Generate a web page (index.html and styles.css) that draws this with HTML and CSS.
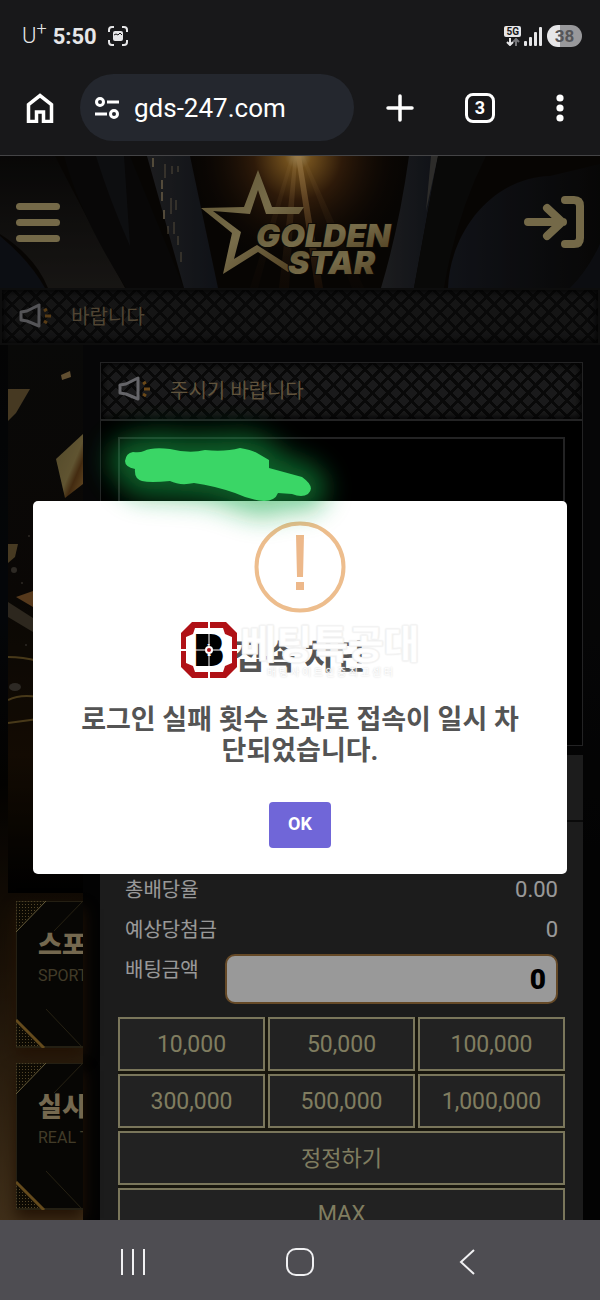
FILE: index.html
```html
<!DOCTYPE html>
<html lang="ko">
<head>
  <meta charset="UTF-8" />
  <meta name="viewport" content="width=device-width, initial-scale=1.0"/>
  <title>Golden Star</title>
  <link rel="stylesheet" href="styles.css">
</head>
<body>
  <div class="status-bar">
    <span class="carrier">U<sup>+</sup></span>
    <span class="clock">5:50</span>
    <svg class="capture" width="20" height="20" viewBox="0 0 20 20">
      <path d="M1 6V4q0-3 3-3h2M14 1h2q3 0 3 3v2M19 14v2q0 3-3 3h-2M6 19H4q-3 0-3-3v-2" fill="none" stroke="#e6e6e8" stroke-width="2"/>
      <rect x="5" y="5" width="10" height="10" rx="2" fill="#e6e6e8"/>
      <path d="M6 9l2-1 2 1 2-2 2 2" fill="none" stroke="#18181a" stroke-width="1"/>
    </svg>
    <span class="network"><b>5G</b>
      <svg width="14" height="8" viewBox="0 0 14 8" fill="none" stroke-width="2">
        <path d="M4 0v6M1 4l3 3 3-3" stroke="#e6e6e8"/>
        <path d="M10 8V2M7 4l3-3 3 3" stroke="#77777b"/>
      </svg>
    </span>
    <svg width="18" height="19" viewBox="0 0 18 19" fill="#e6e6e8">
      <rect x="0" y="14" width="3" height="5" rx="1"/><rect x="5" y="10" width="3" height="9" rx="1"/>
      <rect x="10" y="5" width="3" height="14" rx="1"/><rect x="15" y="0" width="3" height="19" rx="1"/>
    </svg>
    <span class="battery">38</span>
  </div>

  <div class="toolbar">
    <button class="tool" aria-label="Home">
      <svg width="28" height="30" viewBox="0 0 28 30"><path d="M2.500 28.500V11.500L14 2.500l11.500 9v17h-8v-9.500h-7v9.500z" fill="none" stroke="#fff" stroke-width="3.500"/></svg>
    </button>
    <label class="address">
      <svg width="26" height="24" viewBox="0 0 26 24" fill="none" stroke="#fff" stroke-width="3">
        <circle cx="6" cy="6" r="3.500"/><path d="M13 6h12M1 18h12"/><circle cx="20" cy="18" r="3.500"/>
      </svg>
      <input type="text" value="gds-247.com" aria-label="Address">
    </label>
    <button class="tool" aria-label="New tab">
      <svg width="28" height="28" viewBox="0 0 28 28"><path d="M14 2v24M2 14h24" stroke="#fff" stroke-width="3.500" stroke-linecap="round"/></svg>
    </button>
    <button class="tool" aria-label="Tabs"><span class="tab-count">3</span></button>
    <button class="tool" aria-label="More">
      <svg width="8" height="28" viewBox="0 0 8 28" fill="#fff"><circle cx="4" cy="4" r="3.600"/><circle cx="4" cy="14" r="3.600"/><circle cx="4" cy="24" r="3.600"/></svg>
    </button>
  </div>

  <div class="site">
    <header class="site-header">
      <svg class="curtain" viewBox="0 0 600 132" preserveAspectRatio="xMidYMid slice">
        <defs>
          <radialGradient id="glow" cx="298" cy="0" r="110" gradientUnits="userSpaceOnUse">
            <stop offset="0" stop-color="#ffd98c"/><stop offset=".12" stop-color="#b8812f"/>
            <stop offset=".4" stop-color="#4d2c10"/><stop offset="1" stop-color="#120a05" stop-opacity="0"/>
          </radialGradient>
          <linearGradient id="fold" x1="0" x2="1"><stop offset="0" stop-color="#2f3033"/><stop offset="1" stop-color="#1a1e27"/></linearGradient>
          <linearGradient id="round" x1="0" x2="1"><stop offset="0" stop-color="#1c1f28"/><stop offset="1" stop-color="#0d0c0b"/></linearGradient>
          <linearGradient id="ray" x1="0" x2="0" y1="0" y2="1"><stop offset="0" stop-color="#ffc873"/><stop offset="1" stop-color="#7a4318" stop-opacity=".3"/></linearGradient>
          <linearGradient id="drape" x1="0" x2="0" y1="0" y2="1"><stop offset="0" stop-color="#0e0d0c"/><stop offset="1" stop-color="#272421"/></linearGradient>
        </defs>
        <rect width="600" height="132" fill="#0d0906"/>
        <path d="M0 80Q30 105 45 132H0z" fill="#151821"/>
        <path d="M55 0Q75 40 125 132H48Q35 100 0 78V0z" fill="url(#drape)"/>
        <path d="M64 0h66l54 132h-58Q80 60 64 0z" fill="#0e0d0c"/>
        <path d="M96 0h28l6 90Q110 45 96 0z" fill="#17181c"/>
        <path d="M147 0h43l28 132h-34z" fill="url(#fold)"/>
        <g stroke="#a3916f" stroke-width="2" fill="none" opacity=".8">
          <path d="M153 2v12M162 24v22M164 54v10" stroke-dasharray="9 3"/>
          <path d="M165 8v14M172 10v8M178 10v6M171 42v16M176 44v10M168 70v8M174 66v12M178 80v9M181 96v10" stroke-width="1"/>
        </g>
        <rect x="190" width="215" height="132" fill="url(#glow)"/>
        <g fill="url(#ray)">
          <path d="M296 0h5l22 132h-8z" opacity=".75"/><path d="M294 0h3l-8 132h-10z" opacity=".35"/>
          <path d="M291 0h3l-36 132h-8z" opacity=".15"/><path d="M301 0h3l60 132h-12z" opacity=".15"/>
        </g>
        <path d="M409 0h29l-24 132h-33q18-60 28-132z" fill="url(#fold)"/>
        <path d="M431 0h7l-12 55z" fill="#4c4a46"/>
        <path d="M438 0h48q-30 60-42 132h-30z" fill="#100f0e"/>
        <path d="M448 132C450 78 490 22 550 20L600 8v124z" fill="url(#round)"/>
        <path d="M570 132q18-18 30-44v44z" fill="#15171d"/>
      </svg>
      <button class="menu-button" aria-label="메뉴"><span></span><span></span><span></span></button>
      <a class="logo" href="#" aria-label="Golden Star">
        <svg width="199" height="113" viewBox="200 165 199 113">
          <defs>
            <linearGradient id="gold" x1="0" x2="1" y1="0" y2="1"><stop offset="0" stop-color="#98854f"/><stop offset=".5" stop-color="#c7b57c"/><stop offset="1" stop-color="#806331"/></linearGradient>
          </defs>
          <path d="M200 207L243 206 257 169 271 206 303 206 298 213 265 213 257 189 249 213 212 210 240 231 233 258 256 244 292 267 287 271 257 251 222 273 231 232z" fill="url(#gold)"/>
          <g fill="url(#gold)" stroke="#160f08" stroke-width="2" paint-order="stroke" class="logo-text">
            <text x="255" y="246">GOLDEN</text>
            <text x="287" y="273">STAR</text>
          </g>
        </svg>
      </a>
      <button class="login-button" aria-label="로그인">
        <svg width="60" height="54" viewBox="0 0 60 54" fill="none" stroke="#c1b078" stroke-width="8" stroke-linecap="round" stroke-linejoin="round">
          <path d="M4 27h35M23 13l15 14-15 14"/><path d="M41 5h9q6 0 6 6v32q0 6-6 6h-9"/>
        </svg>
      </button>
    </header>

    <div class="notice top-notice">
      <svg class="horn" width="32" height="26" viewBox="0 0 32 26" fill="none"><path d="M2 9l6-1 12-6v21L8 18l-6-1z" stroke="#8d8d92" stroke-width="3" stroke-linejoin="round"/><path d="M25 8l3-2M26 13h6M25 18l3 2" stroke="#936525" stroke-width="3"/></svg>
      <span>바랍니다</span>
    </div>

    <div class="content">
      <aside class="side">
        <svg class="side-art" viewBox="0 0 75 548" preserveAspectRatio="xMinYMin slice">
          <defs>
            <linearGradient id="shard" x1="0" x2="1" y1="0" y2="1"><stop offset="0" stop-color="#8a7a47"/><stop offset=".55" stop-color="#a08c52"/><stop offset=".7" stop-color="#71481c"/><stop offset="1" stop-color="#ad8440"/></linearGradient>
            <linearGradient id="night" x1="0" x2="0" y1="0" y2="1"><stop offset="0" stop-color="#100f0e"/><stop offset=".45" stop-color="#110d09"/><stop offset=".75" stop-color="#201305"/><stop offset="1" stop-color="#010101"/></linearGradient>
          </defs>
          <rect width="75" height="548" fill="url(#night)"/>
          <path d="M0 44h22L8 68 0 76z" fill="#75603a"/>
          <path d="M53 30l9-4 1 6-9 3z" fill="#a28453"/>
          <path d="M75 89L48 114l9 39 18-14z" fill="url(#shard)"/>
          <path d="M0 199h10l-3 13-7 6z" fill="#77613a"/>
          <path d="M8 252l17-6v16z" fill="#8f602f"/>
          <path d="M0 257l25 16v14L0 272z" fill="#4b4232"/>
          <path d="M0 312q15 0 30 4M0 355q12-6 30-3M0 378l30-4" fill="none" stroke="#79602b" stroke-width="2"/>
          <g fill="#4b453c"><circle cx="6" cy="225" r="3"/><circle cx="21" cy="191" r="1"/><ellipse cx="7" cy="342" rx="6" ry="4"/><circle cx="14" cy="238" r="1"/><circle cx="18" cy="300" r="1"/></g>
        </svg>
        <a class="game" href="#">
          <svg class="game-frame" width="84" height="147" viewBox="0 0 84 147">
            <defs>
              <pattern id="dots" width="3" height="3" patternUnits="userSpaceOnUse"><rect width="3" height="3" fill="#171106"/><rect width="1" height="1" fill="#8c7544"/></pattern>
            </defs>
            <path d="M0 0h30L0 31z" fill="url(#dots)"/><path d="M0 118l28 29H0z" fill="url(#dots)"/>
            <path d="M0 0h84M0 146h84M0 0v146" stroke="#6d6039" fill="none"/>
            <path d="M30 0L0 31" stroke="#a9975f" stroke-width="1"/>
            <path d="M67 0L38 30M30 108l37 39" stroke="#40381f" fill="none"/>
            <path d="M0 119l28 28" stroke="#a77c30" stroke-width="3"/>
          </svg>
          <strong>스포츠</strong><span>SPORTS</span>
        </a>
        <a class="game" href="#">
          <svg class="game-frame" width="84" height="147" viewBox="0 0 84 147">
            <path d="M0 0h30L0 31z" fill="url(#dots)"/><path d="M0 118l28 29H0z" fill="url(#dots)"/>
            <path d="M0 0h84M0 146h84M0 0v146" stroke="#6d6039" fill="none"/>
            <path d="M30 0L0 31" stroke="#a9975f" stroke-width="1"/>
            <path d="M67 0L38 30M30 108l37 39" stroke="#40381f" fill="none"/>
            <path d="M0 119l28 28" stroke="#a77c30" stroke-width="3"/>
          </svg>
          <strong>실시간</strong><span>REAL TIME</span>
        </a>
      </aside>

      <main class="main">
        <section class="board">
          <div class="notice">
            <svg class="horn" width="32" height="26" viewBox="0 0 32 26" fill="none"><path d="M2 9l6-1 12-6v21L8 18l-6-1z" stroke="#a9a9af" stroke-width="3" stroke-linejoin="round"/><path d="M25 8l3-2M26 13h6M25 18l3 2" stroke="#b37a2a" stroke-width="3"/></svg>
            <span>주시기 바랍니다</span>
          </div>
          <div class="board-body"><div class="board-frame"></div></div>
        </section>

        <form class="slip">
          <div class="slip-head"></div>
          <div class="slip-rows">
            <div class="row"><span>총배당율</span><output>0.00</output></div>
            <div class="row"><span>예상당첨금</span><output>0</output></div>
            <div class="row bet-row"><label for="bet">배팅금액</label><input id="bet" type="text" value="0"></div>
          </div>
          <div class="amounts">
            <button type="button">10,000</button>
            <button type="button">50,000</button>
            <button type="button">100,000</button>
            <button type="button">300,000</button>
            <button type="button">500,000</button>
            <button type="button">1,000,000</button>
            <button type="button" class="wide">정정하기</button>
            <button type="button" class="wide">MAX</button>
          </div>
        </form>
      </main>
    </div>

    <div class="overlay">
      <div class="modal" role="dialog" aria-labelledby="modalTitle">
        <svg class="warn" width="92" height="92" viewBox="0 0 92 92">
          <circle cx="46" cy="46" r="43.500" fill="none" stroke="#edbd8d" stroke-width="4"/>
          <path d="M42 14h8l-1 42h-6zM42 61h8v8h-8z" fill="#edb88a"/>
        </svg>
        <h2 id="modalTitle">접속 차단</h2>
        <p>로그인 실패 횟수 초과로 접속이 일시 차단되었습니다.</p>
        <button class="ok">OK</button>

        <div class="watermark">
          <svg width="58" height="58" viewBox="0 0 58 58">
            <path d="M12 1h34l11 11v34L46 57H12L1 46V12z" fill="#b01116"/>
            <path d="M15 7h28l2 6 7 3v26l-7 3-2 6H15l-2-6-7-3V16l7-3z" fill="#fff"/>
            <path d="M0 29h58M29 0v58" stroke="#fff" stroke-width="2"/>
            <text x="29" y="43" text-anchor="middle" class="badge-letter">B</text>
            <path d="M9 29h40M29 10v38" stroke="#fff" stroke-width="1"/>
            <circle cx="29" cy="29" r="4" fill="#fff"/><circle cx="29" cy="29" r="2" fill="#b01116"/>
          </svg>
          <div class="mark-text"><b>베팅특공대</b><small>배 팅 사 이 트 인 증 최 고 센 터</small></div>
        </div>
      </div>
    </div>

    <svg class="scribble" width="290" height="150" viewBox="80 400 290 150">
      <defs><filter id="soft" x="-40%" y="-90%" width="180%" height="280%"><feGaussianBlur stdDeviation="13"/></filter></defs>
      <path d="M133 452Q140 453 144 451 152 447 170 449 190 454 205 450 225 452 240 448 252 450 257 453 270 458 271 470L302 477Q316 487 308 494 302 498 292 494L278 493Q275 501 264 501 250 500 235 493 215 486 194 483 180 486 170 481 150 483 142 481 134 479 135 469 125 467 125 461 126 453 133 452z" fill="#18a94a" stroke="#18a94a" stroke-width="32" stroke-linejoin="round" filter="url(#soft)" opacity=".55"/>
      <path d="M133 452Q140 453 144 451 152 447 170 449 190 454 205 450 225 452 240 448 252 450 257 453L269 460V468L302 477Q316 487 308 494 302 498 292 494L278 493Q275 501 264 501 250 500 235 493 215 486 194 483 180 486 170 481 150 483 142 481 134 479 135 469 125 467 125 461 126 453 133 452z" fill="#3ad666"/>
    </svg>
  </div>

  <nav class="nav-bar">
    <button aria-label="Recents"><svg width="26" height="28" viewBox="0 0 26 28"><path d="M2 1v26M13 1v26M24 1v26" stroke="#f0f0f2" stroke-width="2"/></svg></button>
    <button aria-label="Home"><svg width="28" height="28" viewBox="0 0 28 28"><rect x="1" y="1" width="26" height="26" rx="9" fill="none" stroke="#f0f0f2" stroke-width="2"/></svg></button>
    <button aria-label="Back"><svg width="18" height="28" viewBox="0 0 18 28"><path d="M16 2L3 14l13 12" fill="none" stroke="#f0f0f2" stroke-width="2"/></svg></button>
  </nav>
</body>
</html>
```
FILE: styles.css
```css
* {
  box-sizing: border-box;
}

body {
  margin: 0;
  height: 100vh;
  display: flex;
  flex-direction: column;
  overflow: hidden;
  background: #18181a;
  color: #fff;
  font-family: Roboto, "Noto Sans CJK KR", sans-serif;
}

button {
  font-family: inherit;
  border: none;
  padding: 0;
  background: none;
  color: inherit;
  cursor: pointer;
}

input {
  font-family: inherit;
}

svg {
  display: block;
}

/* phone status bar */
.status-bar {
  display: flex;
  align-items: center;
  padding: 24px 18px 12px 22px;
  height: 60px;
  color: #e6e6e8;
}

.carrier {
  font-size: 22px;
  font-weight: 300;
  line-height: 24px;
}

.carrier sup {
  font-size: 18px;
  line-height: 0;
}

.clock {
  margin-left: 6px;
  font-size: 22px;
  font-weight: 700;
}

.capture {
  margin-left: 11px;
}

.network {
  margin-left: auto;
  margin-right: 3px;
  display: flex;
  flex-direction: column;
  align-items: center;
  gap: 1px;
}

.network b {
  padding: 0 2px;
  border-radius: 2px;
  background: #e6e6e8;
  color: #18181a;
  font-size: 10px;
  line-height: 11px;
}

.battery {
  margin-left: 5px;
  width: 35px;
  border-radius: 11px;
  background: linear-gradient(90deg, #e6e6e8 38%, #98989b 38%);
  color: #555558;
  font-size: 17px;
  font-weight: 700;
  line-height: 22px;
  text-align: center;
}

/* browser toolbar */
.toolbar {
  display: flex;
  align-items: center;
  height: 96px;
  flex-shrink: 0;
  border-bottom: 1px solid #444446;
}

.tool {
  width: 80px;
  height: 66px;
  display: flex;
  align-items: center;
  justify-content: center;
}

.address {
  flex: 1;
  min-width: 0;
  margin-right: 6px;
  height: 67px;
  padding: 0 14px;
  display: flex;
  align-items: center;
  gap: 14px;
  border-radius: 34px;
  background: #24272e;
}

.address input {
  flex: 1;
  min-width: 0;
  padding: 0;
  border: none;
  background: none;
  color: #fff;
  font-size: 26px;
}

.tab-count {
  width: 30px;
  border: 3px solid #fff;
  border-radius: 8px;
  font-size: 18px;
  font-weight: 700;
  line-height: 24px;
}

/* site */
.site {
  position: relative;
  flex: 1;
  min-height: 0;
  overflow: hidden;
  background: linear-gradient(180deg, #0b0b0c 0, #0b0b0c 40%, #050505 70%, #050505 100%);
}

.site-header {
  position: relative;
  display: grid;
  grid-template-columns: 1fr auto 1fr;
  align-items: center;
  height: 132px;
  padding: 0 16px;
}

.curtain {
  position: absolute;
  inset: 0;
  width: 100%;
  height: 100%;
}

.menu-button {
  position: relative;
  justify-self: start;
  width: 44px;
  display: grid;
  gap: 9px;
}

.menu-button span {
  height: 7px;
  border-radius: 4px;
  background: #c1b078;
}

.logo {
  position: relative;
}

.logo-text {
  font-family: Inter, sans-serif;
  font-size: 32px;
  font-weight: 900;
  font-style: italic;
}

.login-button {
  position: relative;
  justify-self: end;
}

.notice {
  display: flex;
  align-items: center;
  gap: 20px;
  height: 56px;
  padding: 0 17px 4px;
  background:
    repeating-linear-gradient(45deg, #0f0f0f 0 3px, transparent 3px 11px),
    repeating-linear-gradient(-45deg, #0f0f0f 0 3px, transparent 3px 11px),
    #2c2c2d;
  box-shadow: inset 0 0 6px 2px #050505;
  color: #a18b65;
  font-size: 20px;
}

.top-notice {
  height: 57px;
  padding-bottom: 2px;
  border: 2px solid #161616;
  background-color: #232324;
  color: #867356;
}

.content {
  display: flex;
  align-items: flex-start;
  gap: 17px;
  padding-right: 17px;
}

.side {
  width: 83px;
  padding-left: 8px;
  background: linear-gradient(180deg, #080808 0, #080b10 30%, #060402 50%, #2a1b0b 70%, #6b4f2b 100%);
}

.side-art {
  width: 100%;
  height: 548px;
  margin-bottom: 8px;
}

.game {
  position: relative;
  display: flex;
  flex-direction: column;
  height: 147px;
  margin: 0 0 15px 8px;
  padding: 26px 0 0 22px;
  overflow: hidden;
  background: #0d0b08;
  box-shadow: 0 8px 14px #3b2009;
  text-decoration: none;
  white-space: nowrap;
}

.game-frame {
  position: absolute;
  top: 0;
  left: 0;
}

.game strong {
  color: #c2ae84;
  font-size: 26px;
  font-weight: 900;
  line-height: 36px;
}

.game span {
  margin-top: 1px;
  color: #6e6343;
  font-size: 16px;
  line-height: 24px;
}

.main {
  flex: 1;
  min-width: 0;
  padding-top: 17px;
}

.board {
  border: 1px solid #3b3b3d;
}

.board-body {
  padding: 16px 17px;
  border-top: 2px solid #3b3b3d;
  background: #000;
}

.board-frame {
  height: 292px;
  border: 2px solid #3b3b3d;
}

.slip {
  margin-top: 9px;
  padding: 0 18px;
  background: #2f2f2f;
}

.slip-head {
  height: 67px;
  margin: 0 -18px;
  border-bottom: 2px solid #111;
}

.slip-rows {
  padding: 48px 7px 0;
}

.row {
  display: flex;
  justify-content: space-between;
  font-size: 20px;
  line-height: 40px;
}

.row output {
  font-size: 22px;
}

.bet-row {
  gap: 26px;
  padding-bottom: 9px;
}

.bet-row input {
  flex: 1;
  min-width: 0;
  height: 50px;
  margin: 4px 0;
  padding: 0 10px;
  border: 2px solid #a97a41;
  border-radius: 10px;
  background: #fff;
  color: #000;
  font-size: 28px;
  font-weight: 900;
  text-align: right;
}

.amounts {
  display: grid;
  grid-template-columns: repeat(3, 1fr);
  gap: 3px;
  background: #292516;
}

.amounts button {
  height: 54px;
  border: 2px solid #cbc598;
  background: #393939;
  color: #d6d0a0;
  font-size: 23px;
}

.amounts .wide {
  grid-column: 1 / -1;
  padding-bottom: 4px;
  font-size: 22px;
}

/* alert */
.overlay {
  position: absolute;
  inset: 0;
  display: flex;
  align-items: center;
  justify-content: center;
  padding: 0 33px 1px;
  background: rgba(0, 0, 0, 0.4);
}

.modal {
  position: relative;
  width: 100%;
  padding: 20px 43px 26px;
  display: flex;
  flex-direction: column;
  align-items: center;
  border-radius: 5px;
  background: #fff;
  color: #545454;
  text-align: center;
}

.modal h2 {
  margin: 24px 0 0;
  font-size: 34px;
  line-height: 40px;
}

.modal p {
  margin: 28px 0 35px;
  font-size: 27px;
  font-weight: 700;
  line-height: 31px;
}

.ok {
  width: 62px;
  height: 46px;
  padding-bottom: 3px;
  border-radius: 4px;
  background: #7066d8;
  color: #fff;
  font-size: 18px;
  font-weight: 700;
}

.watermark {
  position: absolute;
  top: 120px;
  left: 0;
  right: 0;
  display: flex;
  justify-content: center;
  gap: 2px;
}

.badge-letter {
  fill: #000;
  stroke: #000;
  stroke-width: 4px;
  font-family: Inter, sans-serif;
  font-size: 38px;
  font-weight: 900;
}

.mark-text {
  display: flex;
  flex-direction: column;
  color: #fff;
  text-shadow: 0 0 2px #ccc;
}

.mark-text b {
  -webkit-text-stroke: 1px #f4f4f4;
  font-size: 39px;
  font-weight: 900;
  line-height: 48px;
}

.mark-text small {
  font-size: 10px;
  line-height: 8px;
}

.scribble {
  position: absolute;
  top: 244px;
  left: 80px;
}

/* android navigation */
.nav-bar {
  display: grid;
  grid-template-columns: repeat(3, 1fr);
  height: 80px;
  flex-shrink: 0;
  padding: 4px 49px 0;
  background: #4e4d52;
}

.nav-bar button {
  display: flex;
  align-items: center;
  justify-content: center;
}
```
